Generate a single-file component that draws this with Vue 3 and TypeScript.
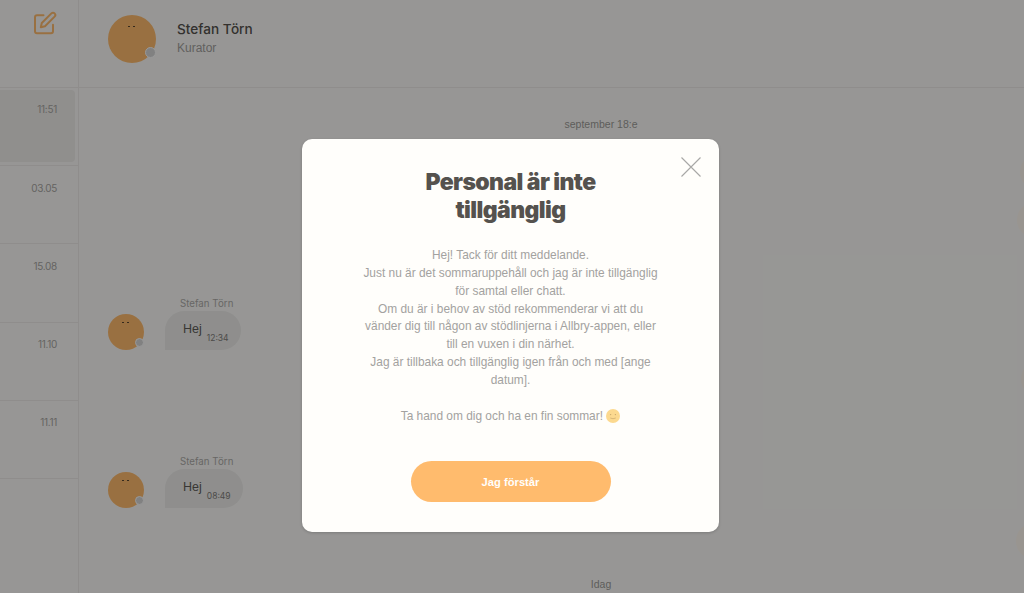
<template>
  <div class="page">
    <aside class="sidebar">
      <div class="sidebar-head">
        <svg class="edit-icon" viewBox="0 0 24 24" width="24" height="24" fill="none" stroke="#ffbb6d" stroke-width="2" stroke-linecap="round" stroke-linejoin="round">
          <path d="M10.5 4.2H4a2 2 0 0 0-2 2v14a2 2 0 0 0 2 2h14a2 2 0 0 0 2-2v-6.5" />
          <path d="M18.4 2.4a2.2 2.2 0 0 1 3.2 3.2L12 15.2l-4.2 1 1-4.2z" />
        </svg>
      </div>
      <div class="conversations">
        <div v-for="item in conversations" :key="item.time" class="conversation" :class="{ active: item.active }">
          <span class="conversation-time">{{ item.time }}</span>
        </div>
      </div>
    </aside>

    <main class="chat">
      <header class="chat-head">
        <div class="avatar avatar-large">
          <span class="eyes"></span>
          <span class="status"></span>
        </div>
        <div class="person">
          <div class="person-name">Stefan Törn</div>
          <div class="person-role">Kurator</div>
        </div>
      </header>

      <section class="messages">
        <div class="date">september 18:e</div>
        <div v-for="msg in messages" :key="msg.time" class="message">
          <div class="avatar avatar-small">
            <span class="eyes"></span>
            <span class="status"></span>
          </div>
          <div>
            <div class="sender">Stefan Törn</div>
            <div class="bubble">
              <span class="bubble-text">Hej</span>
              <span class="bubble-time">{{ msg.time }}</span>
            </div>
          </div>
        </div>
        <div class="date date-today">Idag</div>
        <span v-for="p in peeks" :key="p.top" class="peek" :style="{ top: p.top + 'px', right: p.right + 'px' }"></span>
      </section>
    </main>

    <div class="overlay">
      <div class="modal">
        <button class="close" type="button" aria-label="Stäng">
          <svg viewBox="0 0 20 20" width="20" height="20" fill="none" stroke="#a8a8a6" stroke-width="1.1">
            <path d="M0.5 0.5L19.5 19.5M19.5 0.5L0.5 19.5" />
          </svg>
        </button>
        <h2>Personal är inte<br />tillgänglig</h2>
        <p class="modal-text">
          Hej! Tack för ditt meddelande.<br />
          Just nu är det sommaruppehåll och jag är inte tillgänglig<br />
          för samtal eller chatt.<br />
          Om du är i behov av stöd rekommenderar vi att du<br />
          vänder dig till någon av stödlinjerna i Allbry-appen, eller<br />
          till en vuxen i din närhet.<br />
          Jag är tillbaka och tillgänglig igen från och med [ange<br />
          datum].
        </p>
        <p class="modal-text closing">
          Ta hand om dig och ha en fin sommar!
          <svg class="smiley" viewBox="0 0 14 14" width="14" height="14">
            <circle cx="7" cy="7" r="7" fill="#fcd98f" />
            <circle cx="4.6" cy="5.6" r="0.7" fill="#c9a86c" />
            <circle cx="9.4" cy="5.6" r="0.7" fill="#c9a86c" />
            <path d="M4.6 9.2q2.4 1.2 4.8 0" fill="none" stroke="#c9a86c" stroke-width="0.7" stroke-linecap="round" />
          </svg>
        </p>
        <button class="confirm" type="button">Jag förstår</button>
      </div>
    </div>
  </div>
</template>

<script setup lang="ts">
interface Conversation {
  time: string
  active?: boolean
}

const conversations: Conversation[] = [
  { time: '11:51', active: true },
  { time: '03.05' },
  { time: '15.08' },
  { time: '11.10' },
  { time: '11.11' },
]

const messages = [{ time: '12:34' }, { time: '08:49' }]

// outgoing avatars, cut off by the right edge of the window
const peeks = [
  { top: 66, right: -32 },
  { top: 114, right: -29 },
  { top: 273, right: -33 },
  { top: 435, right: -28 },
]
</script>

<style>
html,
body {
  margin: 0;
  overflow: hidden;
}
</style>

<style scoped>
.page {
  position: relative;
  display: flex;
  width: 1024px;
  height: 593px;
  overflow: hidden;
  background: #fcfbf9;
  font-family: 'Liberation Sans', Arial, sans-serif;
}

.sidebar {
  flex: 0 0 79px;
  box-sizing: border-box;
  border-right: 1px solid #eeece9;
}

.sidebar-head {
  height: 88px;
  box-sizing: border-box;
  padding: 11px 0 0 33px;
  border-bottom: 1px solid #eeece9;
}

.edit-icon {
  display: block;
}

.conversation {
  box-sizing: border-box;
  height: 78.3px;
  padding: 11.5px 21px 0 0;
  border-bottom: 1px solid #eeece9;
  text-align: right;
}

.conversation.active {
  position: relative;
  height: 78px;
  padding-top: 11px;
}

.conversation.active::before {
  content: '';
  position: absolute;
  top: 2px;
  left: 0;
  right: 3px;
  height: 72px;
  background: #f0eeeb;
  border-radius: 0 4px 4px 0;
}

.conversation-time {
  position: relative;
  font-family: Inter, 'Liberation Sans', sans-serif;
  font-size: 10px;
  letter-spacing: -0.3px;
  color: #a8a6a3;
}

.chat {
  flex: 1;
  min-width: 0;
}

.chat-head {
  display: flex;
  align-items: center;
  gap: 21px;
  height: 88px;
  box-sizing: border-box;
  padding: 0 0 0 29px;
  border-bottom: 1px solid #eeece9;
}

.avatar {
  position: relative;
  flex: none;
  border-radius: 50%;
  background: #ffbb6d;
}

.avatar-large {
  width: 48px;
  height: 48px;
  margin-top: -9px;
}

.avatar-small {
  width: 36px;
  height: 36px;
}

.eyes {
  position: absolute;
  top: 23%;
  left: 50%;
  width: 2px;
  height: 1px;
  margin-left: -4px;
  background: #5a4630;
  box-shadow: 5px 0 0 #5a4630;
}

.status {
  position: absolute;
  right: 0;
  bottom: 5px;
  width: 9px;
  height: 9px;
  background: #d8d8d8;
  border: 1.5px solid #ffffff;
  border-radius: 50%;
}

.avatar-small .status {
  right: 0;
  bottom: 3px;
  width: 7px;
  height: 7px;
}

.person {
  margin-top: -12px;
}

.person-name {
  font-family: Inter, 'Liberation Sans', sans-serif;
  font-size: 13.6px;
  font-weight: 500;
  line-height: 18px;
  color: #55524e;
}

.person-role {
  margin-top: 3px;
  font-size: 12px;
  line-height: 14px;
  color: #a3a19e;
}

.messages {
  position: relative;
  height: 505px;
  padding: 29px 0 0 29px;
  box-sizing: border-box;
}

.date {
  width: 1044px;
  margin-left: -29px;
  font-size: 10.5px;
  line-height: 14px;
  text-align: center;
  color: #9d9b98;
}

.date-today {
  margin-top: 69px;
}

.message {
  display: flex;
  align-items: flex-end;
  gap: 21px;
  margin-top: 105px;
}

.date + .message {
  margin-top: 166px;
}

.sender {
  padding-left: 15px;
  font-family: Inter, 'Liberation Sans', sans-serif;
  font-size: 9.7px;
  line-height: 14px;
  color: #adaba8;
}

.bubble {
  display: flex;
  align-items: flex-start;
  box-sizing: border-box;
  height: 39px;
  padding: 10px 12px 0 18px;
  background: #eeedeb;
  border-radius: 20px 20px 20px 0;
}

.bubble-text {
  font-size: 12.5px;
  line-height: 16px;
  color: #5f5c58;
}

.bubble-time {
  margin: 11px 0 0 5px;
  font-family: Inter, 'Liberation Sans', sans-serif;
  font-size: 8.5px;
  line-height: 12px;
  color: #7f7d7a;
}

.peek {
  position: absolute;
  width: 36px;
  height: 36px;
  border-radius: 50%;
  background: #fff8f0;
}

.overlay {
  position: absolute;
  inset: 0;
  display: flex;
  justify-content: center;
  background: rgba(0, 0, 0, 0.4);
}

.modal {
  position: relative;
  box-sizing: border-box;
  width: 417px;
  height: 393px;
  margin: 139px 0 0 -3px;
  padding: 30px 50px 0;
  background: #fffefb;
  border-radius: 10px;
  box-shadow: 0 1px 3px rgba(0, 0, 0, 0.18);
  text-align: center;
}

.close {
  position: absolute;
  top: 18px;
  right: 18px;
  padding: 0;
  border: 0;
  background: none;
  line-height: 0;
}

h2 {
  margin: 0 0 23px;
  font-family: Inter, 'Liberation Sans', sans-serif;
  font-size: 23px;
  font-weight: 900;
  line-height: 27.5px;
  letter-spacing: -0.6px;
  color: #55524e;
}

.modal-text {
  margin: 0;
  font-size: 11.9px;
  line-height: 17.85px;
  color: #a3a2a0;
}

.closing {
  margin-top: 17.85px;
}

.smiley {
  vertical-align: -3px;
}

.confirm {
  display: block;
  width: 200px;
  height: 41px;
  margin: 36px auto 0;
  border: 0;
  border-radius: 21px;
  background: #ffbb6d;
  font-family: 'Liberation Sans', Arial, sans-serif;
  font-size: 11.2px;
  font-weight: 700;
  color: #fffefb;
}
</style>
